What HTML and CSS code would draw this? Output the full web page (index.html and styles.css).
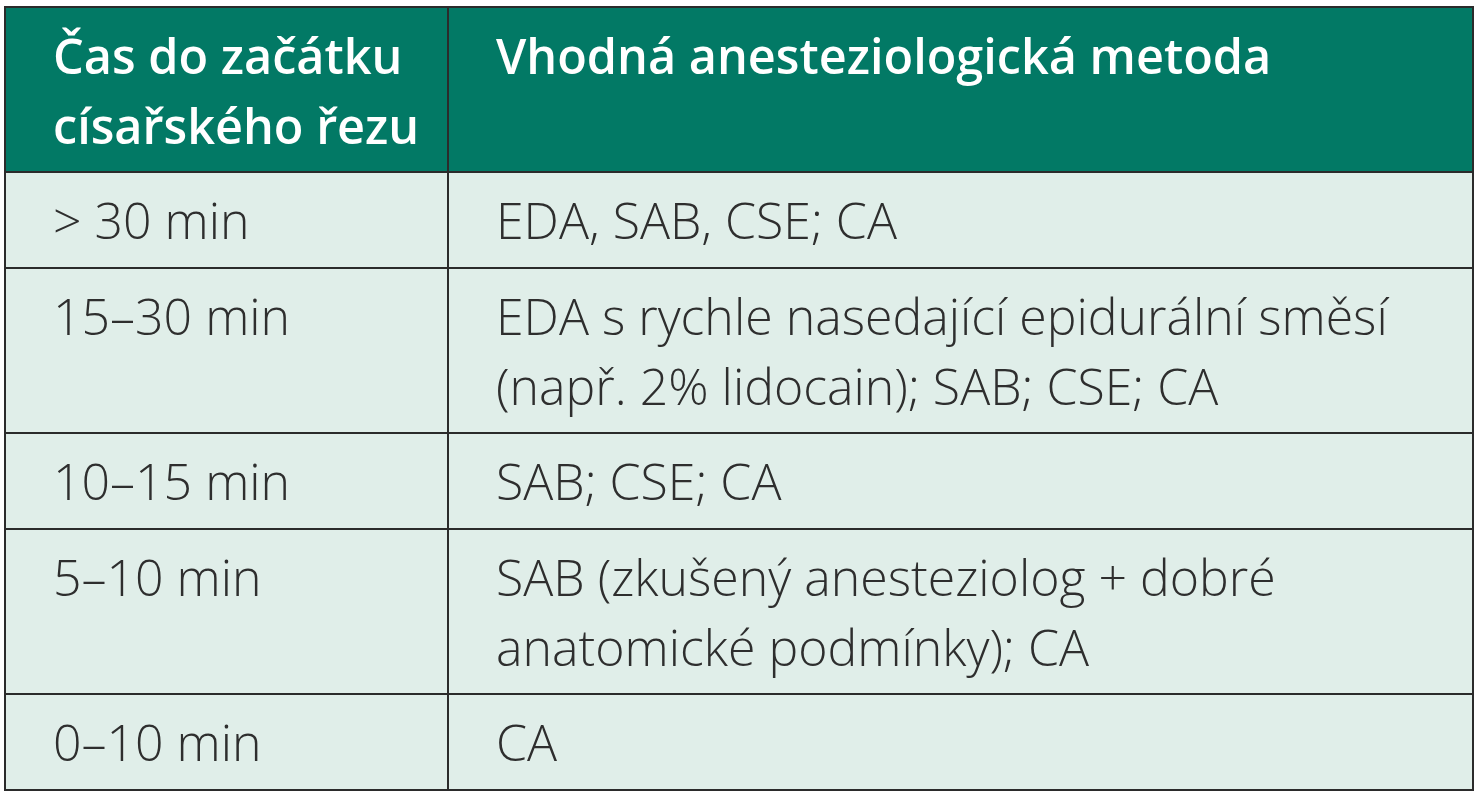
FILE: index.html
```html
<!DOCTYPE html>
<html lang="cs">
<head>
<meta charset="utf-8">
<title>Tabulka</title>
<link rel="stylesheet" href="styles.css">
</head>
<body>
<table class="tbl">
  <thead>
    <tr>
      <th class="c1">Čas do začátku<br>císařského řezu</th>
      <th class="c2">Vhodná anesteziologická metoda</th>
    </tr>
  </thead>
  <tbody>
    <tr><td>&gt; 30 min</td><td>EDA, SAB, CSE; CA</td></tr>
    <tr><td>15–30 min</td><td>EDA s rychle nasedající epidurální směsí<br>(např. 2% lidocain); SAB; CSE; CA</td></tr>
    <tr><td>10–15 min</td><td>SAB; CSE; CA</td></tr>
    <tr><td>5–10 min</td><td>SAB (zkušený anesteziolog + dobré<br>anatomické podmínky); CA</td></tr>
    <tr><td>0–10 min</td><td>CA</td></tr>
  </tbody>
</table>
</body>
</html>
```
FILE: styles.css
```css
html, body {
  margin: 0;
  padding: 0;
  background: #ffffff;
}
body {
  padding: 6px 0 0 4px;
}
.tbl {
  border-collapse: collapse;
  width: 1470px;
  font-family: "Open Sans", "Noto Sans", sans-serif;
  color: #2e2e2e;
  border: 2px solid #2b2b2b;
}
.tbl th, .tbl td {
  border: 2px solid #2b2b2b;
  text-align: left;
  vertical-align: top;
  padding-left: 47px;
  padding-right: 0;
}
.tbl th {
  background: #027965;
  color: #ffffff;
  font-weight: 600;
  font-size: 48.6px;
  line-height: 70px;
  padding-top: 12px;
  padding-bottom: 11px;
}
.tbl th.c1 {
  width: 394px;
}
.tbl td {
  background: #e0eee9;
  font-weight: 300;
  font-size: 50px;
  line-height: 70px;
  padding-top: 12px;
  padding-bottom: 11.6px;
}
```
